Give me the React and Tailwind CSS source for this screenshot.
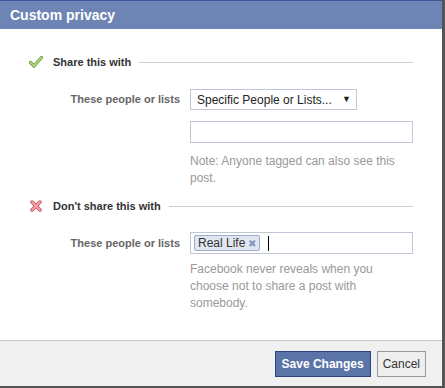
import React from "react";

function CheckIcon() {
  return (
    <svg width="14" height="12" viewBox="0 0 14 12">
      <path d="M1.5 6.5 L5 10 L12.5 1.5" fill="none" stroke="#6a9a3a" strokeWidth="3.2" strokeLinecap="round" strokeLinejoin="round" />
      <path d="M1.5 6.5 L5 10 L12.5 1.5" fill="none" stroke="#b9dd88" strokeWidth="1.6" strokeLinecap="round" strokeLinejoin="round" />
    </svg>
  );
}

function XIcon() {
  return (
    <svg width="12" height="12" viewBox="0 0 12 12">
      <path d="M2 2 L10 10 M10 2 L2 10" fill="none" stroke="#c0474f" strokeWidth="3.4" strokeLinecap="round" />
      <path d="M2 2 L10 10 M10 2 L2 10" fill="none" stroke="#f4a6ab" strokeWidth="1.8" strokeLinecap="round" />
    </svg>
  );
}

function SectionHeader({ icon, text }) {
  return (
    <div className="flex items-center h-[14px] pl-[29px] pr-[29px]">
      <div className="w-[14px] flex justify-center">{icon}</div>
      <span className="ml-[10px] text-[11px] font-bold text-[#333]">{text}</span>
      <div className="flex-1 ml-[8px] h-px bg-[#cccccc]" />
    </div>
  );
}

export default function App() {
  return (
    <div
      className="w-[445px] h-[388px] flex flex-col bg-white border-r-[3px] border-b-2 border-[#555555]"
      style={{ fontFamily: '"Liberation Sans", Arial, sans-serif' }}
    >
      <div className="h-[29px] border-t border-[#3b5998] bg-[#6d84b4] flex items-center pl-[10px]">
        <span className="text-[14px] font-bold text-white">Custom privacy</span>
      </div>
      <div className="flex-1 flex flex-col pt-[26px]">
        <SectionHeader icon={<CheckIcon />} text="Share this with" />
        <div className="flex items-center mt-[20px]">
          <div className="w-[180px] text-right text-[11px] font-bold text-[#666]">These people or lists</div>
          <div className="ml-[10px] w-[167px] h-[21px] border border-[#bdc7d8] flex items-center justify-between pl-[6px] pr-[5px] text-[12px] text-[#222]">
            <span>Specific People or Lists...</span>
            <span className="text-[9px]">▼</span>
          </div>
        </div>
        <div className="ml-[190px] mt-[11px] w-[223px] h-[22px] border border-[#bdc7d8]" />
        <div className="ml-[190px] mt-[10px] w-[225px] text-[12px] leading-[17px] text-[#999]">
          Note: Anyone tagged can also see this post.
        </div>
        <div className="mt-[12px]">
          <SectionHeader icon={<XIcon />} text="Don't share this with" />
        </div>
        <div className="flex items-center mt-[19px]">
          <div className="w-[180px] text-right text-[11px] font-bold text-[#666]">These people or lists</div>
          <div className="ml-[10px] w-[223px] h-[22px] border border-[#bdc7d8] flex items-center pl-[3px]">
            <div className="h-[16px] flex items-center border border-[#9dacce] bg-[#e2e6f0] rounded-[2px] pl-[3px] pr-[3px] text-[12px] text-[#333]">
              <span>Real Life</span>
              <span className="ml-[3px] text-[10px] text-[#8a98bb]">✖</span>
            </div>
            <div className="ml-[8px] w-px h-[15px] bg-black" />
          </div>
        </div>
        <div className="ml-[190px] mt-[7px] w-[190px] text-[12px] leading-[17px] text-[#999]">
          Facebook never reveals when you choose not to share a post with somebody.
        </div>
      </div>
      <div className="h-[46px] border-t border-[#cccccc] bg-[#f0f0f0] flex items-center justify-end pr-[16px] gap-[6px]">
        <div className="h-[26px] px-[6px] flex items-center border border-[#29447e] bg-[#5b74a8] text-white text-[12px] font-bold">
          Save Changes
        </div>
        <div className="h-[26px] px-[5px] flex items-center border border-[#999] bg-[#eeeeee] text-[#333] text-[12px]">
          Cancel
        </div>
      </div>
    </div>
  );
}
